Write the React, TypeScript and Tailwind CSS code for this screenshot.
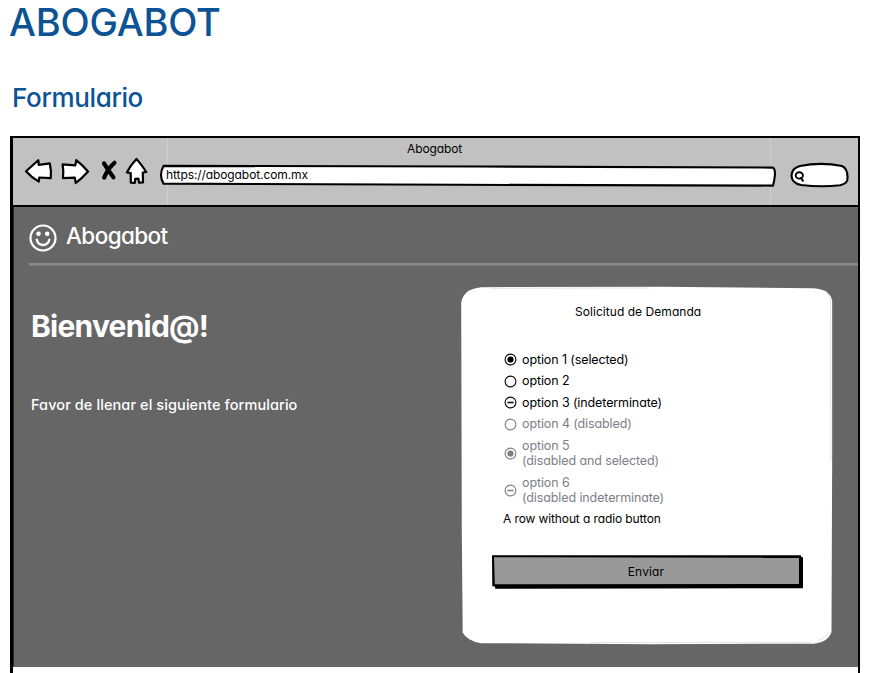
import React from "react";

type RadioState = "selected" | "empty" | "indeterminate";

type Option = {
  lines: string[];
  state: RadioState;
  disabled?: boolean;
  row: string;
};

const options: Option[] = [
  { lines: ["option 1 (selected)"], state: "selected", row: "h-[21px]" },
  { lines: ["option 2"], state: "empty", row: "h-[22px]" },
  { lines: ["option 3 (indeterminate)"], state: "indeterminate", row: "h-[21px]" },
  { lines: ["option 4 (disabled)"], state: "empty", disabled: true, row: "h-[22px]" },
  { lines: ["option 5", "(disabled and selected)"], state: "selected", disabled: true, row: "h-[37px]" },
  { lines: ["option 6", "(disabled indeterminate)"], state: "indeterminate", disabled: true, row: "h-[37px]" },
];

function Radio({ state }: { state: RadioState }) {
  return (
    <svg className="h-[13px] w-[13px] shrink-0" viewBox="0 0 13 13" fill="none" stroke="currentColor">
      <circle cx="6.5" cy="6.5" r="5.4" strokeWidth="1.1" />
      {state === "selected" && <circle cx="6.5" cy="6.5" r="3.1" fill="currentColor" stroke="none" />}
      {state === "indeterminate" && <path d="M3.4 6.5h6.2" strokeWidth="1.5" />}
    </svg>
  );
}

function NavIcons() {
  return (
    <svg className="h-[66px] w-[154px] shrink-0" viewBox="13 138 154 66" fill="#fff" stroke="#000" strokeWidth="2.2" strokeLinejoin="round" strokeLinecap="round">
      <path d="M26 171.2 38.3 160.2 38.8 164.8 49.8 163.4Q51.5 170 50.8 178.2L39.2 177.5 38.8 181.6Q31.5 177.5 26 171.2Z" />
      <path d="M62.6 164.4 75.3 165.3 76.3 160.2Q82.5 165.3 88 171.4 82 178.2 75.8 183L74.8 177.7 63 178.2Q63.8 171 62.6 164.4Z" />
      <path d="M104 163.4Q108.5 171 113.4 177.3M114.5 162.8Q107.5 169 104.2 177.6" strokeWidth="4.2" />
      <path d="M136.5 158.9Q142 165.3 146.3 172L142.8 172.5 143 182.5 139 182.7 138.4 178.7 135.2 178.8 134.8 183 130.8 182.6 130.7 173.2 126.8 172.4Q131 164.5 136.5 158.9Z" />
    </svg>
  );
}

function AddressBar() {
  return (
    <div className="relative h-[24px] w-[618px]">
      <svg className="absolute inset-0 h-full w-full" viewBox="159 163 618 24" fill="#fff" stroke="#000" strokeWidth="2.1" strokeLinejoin="round">
        <path d="M163.5 165.9 480 166.5 772.5 167.6Q775.5 168.5 774.8 176 774.3 181 773 185.6L460 184.8 163.5 183.6Q158.5 175 163.5 165.9Z" />
      </svg>
      <span className="relative block pl-[7px] pt-[4px] text-[12px] leading-4 tracking-[-0.09px]">https://abogabot.com.mx</span>
    </div>
  );
}

function SearchBox() {
  return (
    <svg className="h-[30px] w-[62px] shrink-0" viewBox="789 160 62 30" fill="#fff" stroke="#000" strokeWidth="2.1" strokeLinecap="round" strokeLinejoin="round">
      <path d="M800 166Q821 161.7 842 166 847.5 168.5 847.5 177 848.5 183.5 840 185.2 822 187.5 801 185 791.5 183 791.5 175.5 792 168 800 166Z" />
      <ellipse cx="799.3" cy="175.4" rx="3.6" ry="3.2" strokeWidth="1.9" />
      <path d="M801 178 803 180.8" strokeWidth="2" />
    </svg>
  );
}

function Smiley() {
  return (
    <svg className="mt-px h-[28px] w-[28px] shrink-0" viewBox="0 0 28 28" fill="none" stroke="#fff" strokeLinecap="round">
      <circle cx="14" cy="14" r="12.5" strokeWidth="2.2" />
      <circle cx="9.5" cy="9.7" r="2.3" fill="#fff" stroke="none" />
      <circle cx="18.2" cy="9.7" r="2.3" fill="#fff" stroke="none" />
      <path d="M7.8 15.7Q9 20.8 14 21 19 20.8 20.3 15.7" strokeWidth="2.3" />
    </svg>
  );
}

function RequestCard() {
  return (
    <section className="relative h-[360px] w-[374px] text-black">
      <svg className="absolute inset-0 h-full w-full" viewBox="460 285 374 360" fill="none">
        <path d="M481 287.2 660 286.7 812 288.2Q830 288.5 832.2 301L832.2 450 831.5 632Q828 642.5 813 643.7L650 644.2 481 643.2Q467 641 462.7 632.5L461.8 530 461.2 303Q463 289 481 287.2Z" fill="#fff" />
        <path d="M490 288.3 650 288M827.5 293.5Q830.5 298 830.6 304L830.8 460M590 642.5 812 642.3M818 640.5Q827 637 829.5 632" stroke="#d9d9d9" strokeWidth=".7" />
      </svg>
      <div className="relative flex flex-col pl-[43px]">
        <h3 className="mt-[19px] pl-[72px] text-[12px] leading-4 tracking-[0.05px]">Solicitud de Demanda</h3>
        <div className="mt-[29px] flex flex-col pl-[1px] text-[12.5px] tracking-[-0.11px]">
          {options.map((option) => (
            <div key={option.lines[0]} className={`flex items-center gap-[5px] ${option.row} ${option.disabled ? "text-[#7e7e86]" : "text-black"}`}>
              <Radio state={option.state} />
              <div className="-mt-px leading-[15px]">
                {option.lines.map((line) => (
                  <div key={line} className="whitespace-nowrap">{line}</div>
                ))}
              </div>
            </div>
          ))}
        </div>
        <p className="text-[12px] leading-[20px] tracking-[-0.11px]">A row without a radio button</p>
      </div>
      <button className="relative ml-[31px] mt-[26px] block h-[34px] w-[312px]">
        <svg className="absolute inset-0 h-full w-full" viewBox="491 555 312 34">
          <path d="M492 555.2 801 555.2 801 556.8 803.7 557.3 803.5 588.3 495.2 588.7 495 586.6 492.3 586.2Z" fill="#000" />
          <path d="M494 557.3 799 557.8 799 584 494.8 584.2Z" fill="#999" />
        </svg>
        <span className="relative -left-[1px] -top-[2px] text-[12px] tracking-[0.15px]">Enviar</span>
      </button>
    </section>
  );
}

export default function App() {
  return (
    <div className="h-[673px] w-[885px] overflow-hidden bg-white font-['Inter',sans-serif] text-black [font-feature-settings:'cv11']">
      <h1 className="h-[74px] pl-[9px] text-[38px] font-medium leading-[44px] tracking-[-0.2px] text-[#0b5394]">ABOGABOT</h1>
      <h2 className="h-[62px] pl-[12px] pt-[6px] text-[26px] font-medium leading-[36px] tracking-[-0.35px] text-[#0b5394]">Formulario</h2>
      <main className="ml-[10px] h-[540px] w-[850px] border-l-[3px] border-r-[2px] border-t-[2px] border-black">
        <header className="flex h-[69px] border-b-[2px] border-black bg-[#c1c1c1]">
          <NavIcons />
          <div className="h-[67px] w-[604px] shrink-0 border-x border-[#cecece]">
            <div className="pl-[239px] pt-[3px] text-[12px] leading-[16px] tracking-[-0.1px]">Abogabot</div>
            <div className="-ml-[9px] pt-[6px]"><AddressBar /></div>
          </div>
          <div className="pl-[18px] pt-[22px]"><SearchBox /></div>
        </header>
        <div className="h-[460px] border-l border-[#242627] bg-[#666]">
          <div className="flex h-[56px] items-center gap-[9px] pl-[15px] pt-[4px] text-white">
            <Smiley />
            <span className="-mt-[2px] text-[22.5px] font-medium leading-[30px] tracking-[-0.6px]">Abogabot</span>
          </div>
          <div className="ml-[15px] h-[3px] border-b border-[#777] bg-[#8a8a8a]" />
          <div className="flex pt-[19px]">
            <div className="w-[446px] pl-[17px] text-white">
              <h2 className="pt-[21px] text-[30px] font-bold leading-[40px] tracking-[-0.78px]">Bienvenid@!</h2>
              <p className="pt-[49px] text-[14.5px] font-medium leading-[20px] tracking-[0.09px]">Favor de llenar el siguiente formulario</p>
            </div>
            <RequestCard />
          </div>
        </div>
      </main>
    </div>
  );
}
